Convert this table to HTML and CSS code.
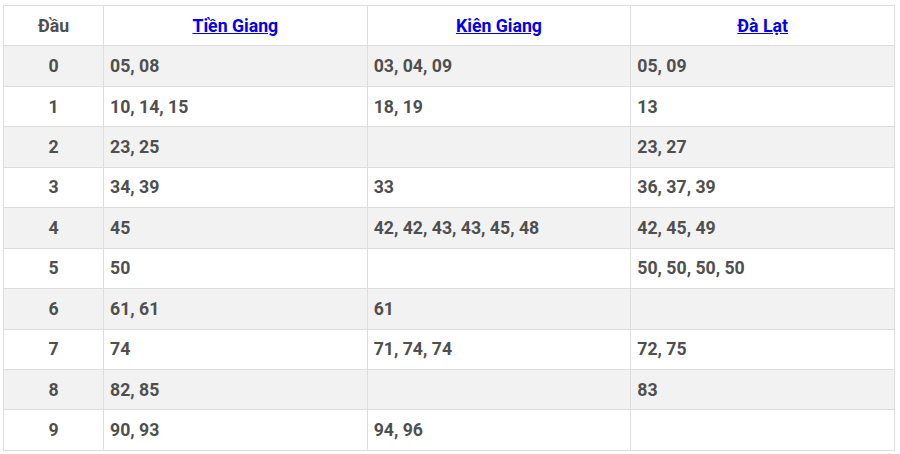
FILE: index.html
```html
<!DOCTYPE html>
<html>
<head>
<meta charset="utf-8">
<link rel="stylesheet" href="styles.css">
</head>
<body>
<table class="loto">
  <thead>
    <tr><th class="dau">Đầu</th><th><a href="#">Tiền Giang</a></th><th><a href="#">Kiên Giang</a></th><th><a href="#">Đà Lạt</a></th></tr>
  </thead>
  <tbody>
    <tr><td class="dau">0</td><td>05, 08</td><td>03, 04, 09</td><td>05, 09</td></tr>
    <tr><td class="dau">1</td><td>10, 14, 15</td><td>18, 19</td><td>13</td></tr>
    <tr><td class="dau">2</td><td>23, 25</td><td></td><td>23, 27</td></tr>
    <tr><td class="dau">3</td><td>34, 39</td><td>33</td><td>36, 37, 39</td></tr>
    <tr><td class="dau">4</td><td>45</td><td>42, 42, 43, 43, 45, 48</td><td>42, 45, 49</td></tr>
    <tr><td class="dau">5</td><td>50</td><td></td><td>50, 50, 50, 50</td></tr>
    <tr><td class="dau">6</td><td>61, 61</td><td>61</td><td></td></tr>
    <tr><td class="dau">7</td><td>74</td><td>71, 74, 74</td><td>72, 75</td></tr>
    <tr><td class="dau">8</td><td>82, 85</td><td></td><td>83</td></tr>
    <tr><td class="dau">9</td><td>90, 93</td><td>94, 96</td><td></td></tr>
  </tbody>
</table>
</body>
</html>
```
FILE: styles.css
```css
html, body { margin: 0; padding: 0; background: #fff; }
body { padding: 5px 0 0 3px; font-family: Roboto, "Liberation Sans", sans-serif; }
.loto {
  border-collapse: collapse;
  width: 892px;
  table-layout: fixed;
  color: #4f4f4f;
  font-size: 17.7px;
  font-weight: bold;
}
.loto th, .loto td {
  border: 1px solid #ddd;
  height: 40.45px;
  padding: 0 6px;
  box-sizing: border-box;
}
.loto th { text-align: center; }
.loto th.dau, .loto td.dau { width: 100px; text-align: center; }
.loto a { color: #0000ee; text-decoration: underline; }
.loto tbody tr:nth-child(odd) { background: #f2f2f2; }
```
